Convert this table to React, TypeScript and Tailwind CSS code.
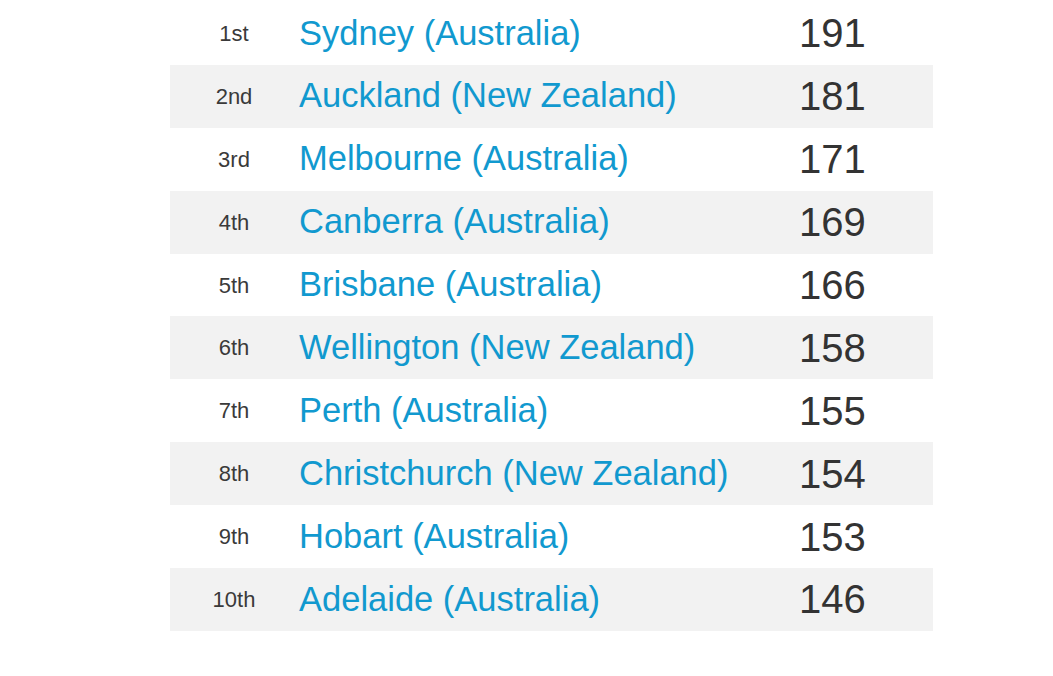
import React from "react";

const rows = [
  ["1st", "Sydney (Australia)", "191"],
  ["2nd", "Auckland (New Zealand)", "181"],
  ["3rd", "Melbourne (Australia)", "171"],
  ["4th", "Canberra (Australia)", "169"],
  ["5th", "Brisbane (Australia)", "166"],
  ["6th", "Wellington (New Zealand)", "158"],
  ["7th", "Perth (Australia)", "155"],
  ["8th", "Christchurch (New Zealand)", "154"],
  ["9th", "Hobart (Australia)", "153"],
  ["10th", "Adelaide (Australia)", "146"],
];

export default function App() {
  return (
    <div
      className="w-[1053px] h-[676px] bg-white pt-[2px]"
      style={{ fontFamily: '"Liberation Sans", Arial, sans-serif' }}
    >
      <div className="ml-[170px] w-[763px] flex flex-col">
        {rows.map(([rank, city, score], i) => (
          <div
            key={rank}
            className={`grid grid-cols-[128px_1fr_136px] items-center h-[62.9px] ${
              i % 2 === 1 ? "bg-[#f2f2f2]" : "bg-white"
            }`}
          >
            <div className="text-center text-[22px] text-[#3a3a3a]">{rank}</div>
            <div className="pl-[1px] text-[34.5px] text-[#1199cf] whitespace-nowrap">{city}</div>
            <div className="pl-[2px] text-[40px] text-[#333333]">{score}</div>
          </div>
        ))}
      </div>
    </div>
  );
}
